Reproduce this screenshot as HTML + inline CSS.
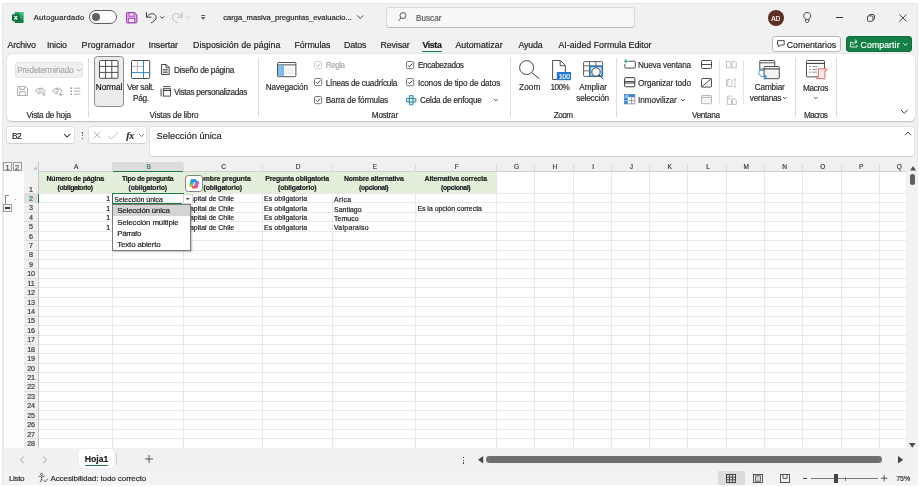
<!DOCTYPE html>
<html lang="es"><head><meta charset="utf-8"><title>carga_masiva_preguntas_evaluacion - Excel</title>
<style>
html,body{margin:0;padding:0;}
body{will-change:transform;width:921px;height:487px;overflow:hidden;background:#fff;position:relative;font-family:"Liberation Sans",sans-serif;}
.r{position:absolute;box-sizing:border-box;}
.t{position:absolute;white-space:nowrap;box-sizing:border-box;-webkit-text-stroke:0.18px currentColor;}
svg{overflow:visible;}
</style></head>
<body>
<div class="r" style="left:2.40px;top:2.50px;width:916.00px;height:482.80px;background:#f1f1f1;border:1px solid #e6e6e6;"></div>
<svg class="r" style="left:11.80px;top:11.80px;" width="11.40" height="11.00" viewBox="0 0 11.40 11.00"><rect x="2.6" y="0" width="8.8" height="11" rx="0.8" fill="#21a366"/><rect x="7" y="0" width="4.4" height="3.6" fill="#33c481"/><rect x="7" y="3.6" width="4.4" height="3.7" fill="#21a366"/><rect x="2.6" y="7.3" width="8.8" height="3.7" rx="0.8" fill="#107c41"/><rect x="2.6" y="3.6" width="4.4" height="3.7" fill="#107c41"/><rect x="0" y="2.3" width="7.6" height="6.8" rx="0.8" fill="#0e6b38"/><path d="M2.3 3.9 L5.3 7.6 M5.3 3.9 L2.3 7.6" stroke="#fff" stroke-width="1.1" fill="none"/></svg>
<div class="t" style="top:12.78px;height:10.64px;line-height:10.64px;font-size:7.6px;color:#1c1c1c;letter-spacing:0.241px;left:33.80px;">Autoguardado</div>
<div class="r" style="left:89.40px;top:10.20px;width:28.00px;height:13.60px;background:#fdfdfd;border:1px solid #5c5c5c;border-radius:7px;"></div>
<div class="r" style="left:92.00px;top:12.80px;width:8.40px;height:8.40px;background:#636363;border-radius:4.2px;"></div>
<svg class="r" style="left:125.60px;top:11.80px;" width="11.40" height="11.40" viewBox="0 0 11.40 11.40"><path d="M1.2 0.5 H8.6 L10.9 2.8 V10.2 C10.9 10.6 10.6 10.9 10.2 10.9 H1.2 C0.8 10.9 0.5 10.6 0.5 10.2 V1.2 C0.5 0.8 0.8 0.5 1.2 0.5 Z" fill="#dca6e4" stroke="#a136b4" stroke-width="1"/><rect x="3" y="0.9" width="5" height="3.2" fill="#fbf0fc" stroke="#a136b4" stroke-width="0.8"/><rect x="2.7" y="6.5" width="6" height="4.2" fill="#fbf0fc" stroke="#a136b4" stroke-width="0.8"/></svg>
<svg class="r" style="left:145.60px;top:11.80px;" width="10.60" height="11.00" viewBox="0 0 10.60 11.00"><path d="M0.5 0.2 V5.2 H5.5" fill="none" stroke="#3a3a3a" stroke-width="1"/><path d="M0.8 5 C3 1.4 7.2 0.8 9.2 3 C11.2 5.2 10 8.6 5 11" fill="none" stroke="#3a3a3a" stroke-width="1"/></svg>
<svg class="r" style="left:160.00px;top:15.90px;" width="4.40" height="2.80" viewBox="0 0 4.40 2.80"><path d="M0.3 0.4 L2.2 2.3 L4.1 0.4" fill="none" stroke="#333" stroke-width="0.95"/></svg>
<svg class="r" style="left:172.00px;top:11.80px;" width="10.60" height="11.00" viewBox="0 0 10.60 11.00"><path d="M10.1 0.2 V5.2 H5.1" fill="none" stroke="#b9b9b9" stroke-width="1"/><path d="M9.8 5 C7.6 1.4 3.4 0.8 1.4 3 C-0.6 5.2 0.6 8.6 5.6 11" fill="none" stroke="#b9b9b9" stroke-width="1"/></svg>
<svg class="r" style="left:186.00px;top:15.90px;" width="4.40" height="2.80" viewBox="0 0 4.40 2.80"><path d="M0.3 0.4 L2.2 2.3 L4.1 0.4" fill="none" stroke="#bdbdbd" stroke-width="0.9"/></svg>
<svg class="r" style="left:200.60px;top:14.80px;" width="4.40" height="4.80" viewBox="0 0 4.40 4.80"><path d="M0.3 0.5 H4.1" stroke="#444" stroke-width="0.9"/><path d="M0.5 2.4 H3.9 L2.2 4.4 Z" fill="#777" stroke="#444" stroke-width="0.7" stroke-linejoin="round"/></svg>
<div class="t" style="top:12.98px;height:10.64px;line-height:10.64px;font-size:7.6px;color:#1c1c1c;letter-spacing:0.023px;left:223.20px;">carga_masiva_preguntas_evaluacio...</div>
<svg class="r" style="left:357.00px;top:15.40px;" width="6.60" height="4.20" viewBox="0 0 6.60 4.20"><path d="M0.4 0.5 L3.3 3.5 L6.2 0.5" fill="none" stroke="#333" stroke-width="0.9"/></svg>
<div class="r" style="left:386.00px;top:7.00px;width:249.00px;height:21.40px;background:#f7f7f7;border:1px solid #d9d9d9;border-radius:3px;border-bottom-color:#bdbdbd;"></div>
<svg class="r" style="left:397.60px;top:12.40px;" width="8.40" height="9.20" viewBox="0 0 8.40 9.20"><circle cx="5" cy="3.6" r="3" fill="none" stroke="#444" stroke-width="0.9"/><path d="M3 5.9 L0.5 8.8" stroke="#444" stroke-width="0.9"/></svg>
<div class="t" style="top:12.56px;height:11.48px;line-height:11.48px;font-size:8.2px;color:#555;letter-spacing:-0.004px;left:416.00px;">Buscar</div>
<div class="r" style="left:767.80px;top:9.60px;width:16.00px;height:16.00px;background:#5e2f22;border-radius:8px;"></div>
<div class="t" style="top:13.58px;height:9.24px;line-height:9.24px;font-size:6.6px;color:#fff;left:625.80px;width:300px;text-align:center;">AD</div>
<svg class="r" style="left:802.80px;top:12.20px;" width="8.40" height="11.00" viewBox="0 0 8.40 11.00"><path d="M4.2 0.5 C6.4 0.5 7.7 2 7.7 3.9 C7.7 5.4 6.6 6.2 6 7.4 H2.4 C1.8 6.2 0.7 5.4 0.7 3.9 C0.7 2 2 0.5 4.2 0.5 Z" fill="none" stroke="#333" stroke-width="0.9"/><path d="M2.6 7.4 V9 C2.6 10 3.3 10.5 4.2 10.5 C5.1 10.5 5.8 10 5.8 9 V7.4" fill="none" stroke="#333" stroke-width="0.9"/></svg>
<div class="r" style="left:835.60px;top:16.90px;width:7.40px;height:0.90px;background:#333;"></div>
<svg class="r" style="left:867.40px;top:14.00px;" width="8.00" height="7.80" viewBox="0 0 8.00 7.80"><rect x="0.5" y="1.9" width="5.4" height="5.4" rx="1" fill="none" stroke="#333" stroke-width="0.9"/><path d="M2 1.7 C2 0.9 2.5 0.5 3.2 0.5 H6.2 C7 0.5 7.5 1 7.5 1.8 V4.6 C7.5 5.4 7 5.8 6.2 5.8" fill="none" stroke="#333" stroke-width="0.9"/></svg>
<svg class="r" style="left:899.40px;top:13.80px;" width="7.80" height="7.80" viewBox="0 0 7.80 7.80"><path d="M0.4 0.4 L7.4 7.4 M7.4 0.4 L0.4 7.4" stroke="#333" stroke-width="0.9"/></svg>
<div class="t" style="top:38.74px;height:12.32px;line-height:12.32px;font-size:8.8px;color:#1c1c1c;letter-spacing:-0.124px;left:7.40px;">Archivo</div>
<div class="t" style="top:38.74px;height:12.32px;line-height:12.32px;font-size:8.8px;color:#1c1c1c;letter-spacing:-0.109px;left:47.00px;">Inicio</div>
<div class="t" style="top:38.74px;height:12.32px;line-height:12.32px;font-size:8.8px;color:#1c1c1c;letter-spacing:0.164px;left:81.60px;">Programador</div>
<div class="t" style="top:38.74px;height:12.32px;line-height:12.32px;font-size:8.8px;color:#1c1c1c;letter-spacing:-0.062px;left:148.60px;">Insertar</div>
<div class="t" style="top:38.74px;height:12.32px;line-height:12.32px;font-size:8.8px;color:#1c1c1c;letter-spacing:0.070px;left:193.00px;">Disposición de página</div>
<div class="t" style="top:38.74px;height:12.32px;line-height:12.32px;font-size:8.8px;color:#1c1c1c;letter-spacing:-0.125px;left:294.60px;">Fórmulas</div>
<div class="t" style="top:38.74px;height:12.32px;line-height:12.32px;font-size:8.8px;color:#1c1c1c;letter-spacing:-0.147px;left:344.00px;">Datos</div>
<div class="t" style="top:38.74px;height:12.32px;line-height:12.32px;font-size:8.8px;color:#1c1c1c;letter-spacing:-0.138px;left:380.60px;">Revisar</div>
<div class="t" style="top:38.74px;height:12.32px;line-height:12.32px;font-size:8.8px;color:#1a1a1a;font-weight:bold;letter-spacing:-0.369px;left:422.40px;">Vista</div>
<div class="r" style="left:422.40px;top:50.60px;width:19.40px;height:1.40px;background:#107c41;border-radius:0.7px;"></div>
<div class="t" style="top:38.74px;height:12.32px;line-height:12.32px;font-size:8.8px;color:#1c1c1c;letter-spacing:0.025px;left:455.40px;">Automatizar</div>
<div class="t" style="top:38.74px;height:12.32px;line-height:12.32px;font-size:8.8px;color:#1c1c1c;letter-spacing:-0.148px;left:518.40px;">Ayuda</div>
<div class="t" style="top:38.74px;height:12.32px;line-height:12.32px;font-size:8.8px;color:#1c1c1c;letter-spacing:0.012px;left:558.40px;">AI-aided Formula Editor</div>
<div class="r" style="left:772.40px;top:35.60px;width:68.60px;height:16.40px;background:#fff;border:1px solid #b9b9b9;border-radius:3px;"></div>
<svg class="r" style="left:776.60px;top:39.80px;" width="8.00" height="8.00" viewBox="0 0 8.00 8.00"><path d="M0.6 0.6 H7.2 V5 H3.6 L1.8 6.8 V5 H0.6 Z" fill="none" stroke="#333" stroke-width="0.85" stroke-linejoin="round"/></svg>
<div class="t" style="top:38.61px;height:12.18px;line-height:12.18px;font-size:8.7px;color:#1c1c1c;letter-spacing:0.008px;left:786.80px;">Comentarios</div>
<div class="r" style="left:846.20px;top:35.60px;width:65.60px;height:16.40px;background:#138045;border:1px solid #0f6d3a;border-radius:3px;"></div>
<svg class="r" style="left:850.40px;top:39.40px;" width="8.20" height="8.60" viewBox="0 0 8.20 8.60"><path d="M2.8 3.4 H0.6 V8 H7 V6" fill="none" stroke="#fff" stroke-width="0.85"/><path d="M3 6 C3 3.8 4.4 2.6 6.6 2.6 M5 0.6 L7.2 2.6 L5 4.6" fill="none" stroke="#fff" stroke-width="0.85"/></svg>
<div class="t" style="top:38.61px;height:12.18px;line-height:12.18px;font-size:8.7px;color:#fff;letter-spacing:0.101px;left:860.60px;">Compartir</div>
<svg class="r" style="left:903.20px;top:42.60px;" width="4.80" height="3.00" viewBox="0 0 4.80 3.00"><path d="M0.4 0.4 L2.4 2.4 L4.4 0.4" fill="none" stroke="#fff" stroke-width="0.9"/></svg>
<div class="r" style="left:6.60px;top:53.70px;width:908.00px;height:67.50px;background:#fff;border-radius:5px;box-shadow:0 0.5px 1.5px rgba(0,0,0,0.22);"></div>
<div class="r" style="left:14.80px;top:62.00px;width:68.50px;height:15.60px;background:#f0f0f0;border:1px solid #e6e6e6;border-radius:3px;"></div>
<div class="t" style="top:64.96px;height:11.48px;line-height:11.48px;font-size:8.2px;color:#ababab;letter-spacing:-0.142px;left:17.20px;">Predeterminado</div>
<svg class="r" style="left:76.90px;top:69.40px;" width="4.00" height="2.00" viewBox="0 0 4.00 2.00"><path d="M0 0 L2.0 2 L4 0" fill="none" stroke="#ababab" stroke-width="0.9"/></svg>
<svg class="r" style="left:17.00px;top:86.00px;" width="11.00" height="10.00" viewBox="0 0 11.00 10.00"><path d="M0.8 0.5 H8.6 L10.5 2.4 V9.5 H0.5 V0.8 Z" fill="none" stroke="#a6a6a6" stroke-width="0.9"/><path d="M2.8 0.6 V3.4 H7.6 V0.6 M2.6 9.4 V5.8 H8.4 V9.4" fill="none" stroke="#a6a6a6" stroke-width="0.9"/></svg>
<svg class="r" style="left:34.90px;top:87.00px;" width="11.10" height="9.00" viewBox="0 0 11.10 9.00"><path d="M0.4 3.8 C2.2 0.6 7.4 0 10 3.8 C9 5.2 7.6 6 6.4 6.3 M0.4 3.8 C1.6 5.6 3.6 6.6 5.4 6.5" fill="none" stroke="#a0a0a0" stroke-width="0.9"/><circle cx="5.2" cy="3.6" r="1.5" fill="none" stroke="#a0a0a0" stroke-width="0.85"/><path d="M7.2 5.8 L10.6 9 M10.6 5.8 L7.2 9" stroke="#a0a0a0" stroke-width="0.9"/></svg>
<svg class="r" style="left:52.40px;top:87.00px;" width="11.00" height="9.00" viewBox="0 0 11.00 9.00"><path d="M0.4 3.8 C2.2 0.6 7.4 0 10 3.8 C9.6 4.4 9.2 4.8 8.8 5.1 M0.4 3.8 C1.6 5.6 3.6 6.6 6 6.5" fill="none" stroke="#a0a0a0" stroke-width="0.9"/><circle cx="5.2" cy="3.6" r="1.5" fill="none" stroke="#a0a0a0" stroke-width="0.85"/><path d="M6.8 7.4 H10.8 M8.8 5.4 V9.4" stroke="#a0a0a0" stroke-width="0.9"/></svg>
<svg class="r" style="left:69.70px;top:87.00px;" width="10.50" height="8.40" viewBox="0 0 10.50 8.40"><path d="M3.6 1.2 H10.2 M3.6 4.2 H10.2 M3.6 7.2 H10.2" stroke="#a6a6a6" stroke-width="0.9"/><rect x="0.3" y="0.3" width="1.7" height="1.7" fill="#a6a6a6"/><rect x="0.3" y="3.3" width="1.7" height="1.7" fill="#a6a6a6"/><rect x="0.3" y="6.3" width="1.7" height="1.7" fill="#a6a6a6"/></svg>
<div class="t" style="top:109.96px;height:11.48px;line-height:11.48px;font-size:8.2px;color:#2b2b2b;letter-spacing:-0.222px;left:26.50px;">Vista de hoja</div>
<div class="r" style="left:88.00px;top:57.60px;width:1.00px;height:59.20px;background:#dcdcdc;"></div>
<div class="r" style="left:94.20px;top:56.00px;width:30.20px;height:51.40px;background:#ececec;border:1px solid #8c8c8c;border-radius:3.5px;"></div>
<svg class="r" style="left:99.10px;top:59.90px;" width="19.50" height="18.80" viewBox="0 0 19.50 18.80"><rect x="0.5" y="0.5" width="18.5" height="17.8" rx="1" fill="#fff" stroke="#3b3b3b" stroke-width="0.9"/><path d="M6.6 0.5 V18.3 M12.8 0.5 V18.3 M0.5 6.4 H19 M0.5 12.4 H19" stroke="#3b3b3b" stroke-width="0.9"/></svg>
<div class="t" style="top:82.26px;height:11.48px;line-height:11.48px;font-size:8.2px;color:#111;letter-spacing:0.035px;left:95.80px;">Normal</div>
<svg class="r" style="left:131.10px;top:59.80px;" width="18.90" height="19.00" viewBox="0 0 18.90 19.00"><rect x="0.5" y="0.5" width="18.2" height="18" rx="0.8" fill="#fff" stroke="#3b3b3b" stroke-width="0.9"/><path d="M6.4 0.8 V12.4 M0.8 6.4 H12.2" stroke="#9a9a9a" stroke-width="0.7"/><path d="M12.5 0.9 V18.1 M0.9 12.6 H18.3" stroke="#2b88d8" stroke-width="1"/></svg>
<div class="t" style="top:82.26px;height:11.48px;line-height:11.48px;font-size:8.2px;color:#2b2b2b;letter-spacing:-0.303px;left:127.00px;">Ver salt.</div>
<div class="t" style="top:93.26px;height:11.48px;line-height:11.48px;font-size:8.2px;color:#2b2b2b;letter-spacing:-0.290px;left:133.00px;">Pág.</div>
<svg class="r" style="left:161.10px;top:64.30px;" width="8.70" height="11.00" viewBox="0 0 8.70 11.00"><path d="M0.5 0.5 H5.2 L8.2 3.5 V10.5 H0.5 Z" fill="#fff" stroke="#3b3b3b" stroke-width="0.95"/><path d="M5 0.6 V3.7 H8.1" fill="none" stroke="#3b3b3b" stroke-width="0.85"/><path d="M1.8 5.4 H6.8 M1.8 7 H6.8 M1.8 8.6 H6.8" stroke="#3b3b3b" stroke-width="0.8"/></svg>
<div class="t" style="top:64.96px;height:11.48px;line-height:11.48px;font-size:8.2px;color:#2b2b2b;letter-spacing:-0.229px;left:174.00px;">Diseño de página</div>
<svg class="r" style="left:160.00px;top:86.30px;" width="10.80" height="10.60" viewBox="0 0 10.80 10.60"><path d="M3 0.6 H10.6" stroke="#3b3b3b" stroke-width="0.9"/><rect x="0.2" y="2.6" width="1.9" height="7.8" fill="#9a9a9a"/><rect x="3.4" y="2.7" width="7" height="7.4" fill="#fff" stroke="#3b3b3b" stroke-width="0.9"/><path d="M3.4 4.5 H10.4" stroke="#3b3b3b" stroke-width="1.1"/></svg>
<div class="t" style="top:86.96px;height:11.48px;line-height:11.48px;font-size:8.2px;color:#2b2b2b;letter-spacing:-0.311px;left:174.00px;">Vistas personalizadas</div>
<div class="t" style="top:109.96px;height:11.48px;line-height:11.48px;font-size:8.2px;color:#2b2b2b;letter-spacing:-0.168px;left:149.60px;">Vistas de libro</div>
<div class="r" style="left:257.70px;top:57.60px;width:1.00px;height:59.20px;background:#dcdcdc;"></div>
<svg class="r" style="left:277.20px;top:61.60px;" width="19.60" height="15.40" viewBox="0 0 19.60 15.40"><rect x="0.5" y="0.5" width="18.4" height="14.2" rx="1" fill="#fff" stroke="#3b3b3b" stroke-width="0.9"/><path d="M0.5 2.9 H18.9" stroke="#3b3b3b" stroke-width="0.9"/><rect x="7.6" y="4.6" width="9.6" height="8.4" fill="#f2f2f2"/><rect x="1" y="3.4" width="5.2" height="10.8" fill="#82c0f2"/><path d="M6.2 3.2 V14.4" stroke="#2b7cd3" stroke-width="0.7"/></svg>
<div class="t" style="top:82.26px;height:11.48px;line-height:11.48px;font-size:8.2px;color:#2b2b2b;letter-spacing:-0.123px;left:265.80px;">Navegación</div>
<svg class="r" style="left:313.80px;top:60.50px;" width="8.20" height="8.20" viewBox="0 0 8.20 8.20"><rect x="0.5" y="0.5" width="7.2" height="7.2" rx="1.2" fill="#fff" stroke="#c4c4c4" stroke-width="0.8"/><path d="M2 4.2 L3.5 5.7 L6.3 2.5" fill="none" stroke="#b5b5b5" stroke-width="0.9"/></svg>
<div class="t" style="top:60.26px;height:11.48px;line-height:11.48px;font-size:8.2px;color:#ababab;letter-spacing:-0.556px;left:325.80px;">Regla</div>
<svg class="r" style="left:313.80px;top:77.70px;" width="8.20" height="8.20" viewBox="0 0 8.20 8.20"><rect x="0.5" y="0.5" width="7.2" height="7.2" rx="1.2" fill="#fff" stroke="#555" stroke-width="0.8"/><path d="M2 4.2 L3.5 5.7 L6.3 2.5" fill="none" stroke="#333" stroke-width="0.9"/></svg>
<div class="t" style="top:77.96px;height:11.48px;line-height:11.48px;font-size:8.2px;color:#2b2b2b;letter-spacing:-0.239px;left:325.80px;">Líneas de cuadrícula</div>
<svg class="r" style="left:313.80px;top:95.60px;" width="8.20" height="8.20" viewBox="0 0 8.20 8.20"><rect x="0.5" y="0.5" width="7.2" height="7.2" rx="1.2" fill="#fff" stroke="#555" stroke-width="0.8"/><path d="M2 4.2 L3.5 5.7 L6.3 2.5" fill="none" stroke="#333" stroke-width="0.9"/></svg>
<div class="t" style="top:94.96px;height:11.48px;line-height:11.48px;font-size:8.2px;color:#2b2b2b;letter-spacing:-0.173px;left:325.80px;">Barra de fórmulas</div>
<svg class="r" style="left:405.80px;top:60.50px;" width="8.20" height="8.20" viewBox="0 0 8.20 8.20"><rect x="0.5" y="0.5" width="7.2" height="7.2" rx="1.2" fill="#fff" stroke="#555" stroke-width="0.8"/><path d="M2 4.2 L3.5 5.7 L6.3 2.5" fill="none" stroke="#333" stroke-width="0.9"/></svg>
<div class="t" style="top:60.26px;height:11.48px;line-height:11.48px;font-size:8.2px;color:#2b2b2b;letter-spacing:-0.369px;left:418.00px;">Encabezados</div>
<svg class="r" style="left:405.80px;top:77.70px;" width="8.20" height="8.20" viewBox="0 0 8.20 8.20"><rect x="0.5" y="0.5" width="7.2" height="7.2" rx="1.2" fill="#fff" stroke="#555" stroke-width="0.8"/><path d="M2 4.2 L3.5 5.7 L6.3 2.5" fill="none" stroke="#333" stroke-width="0.9"/></svg>
<div class="t" style="top:77.96px;height:11.48px;line-height:11.48px;font-size:8.2px;color:#2b2b2b;letter-spacing:-0.109px;left:418.00px;">Iconos de tipo de datos</div>
<svg class="r" style="left:406.00px;top:95.00px;" width="10.40" height="10.40" viewBox="0 0 10.40 10.40"><path d="M3.4 0.6 H7 V3.4 H9.8 V7 H7 V9.8 H3.4 V7 H0.6 V3.4 H3.4 Z" fill="#cfe6f7" stroke="#2b7cd3" stroke-width="0.9"/><rect x="3.4" y="3.4" width="3.6" height="3.6" fill="#fff" stroke="#1e8e4e" stroke-width="1"/></svg>
<div class="t" style="top:94.96px;height:11.48px;line-height:11.48px;font-size:8.2px;color:#2b2b2b;letter-spacing:-0.183px;left:420.00px;">Celda de enfoque</div>
<svg class="r" style="left:493.50px;top:99.45px;" width="3.80" height="1.90" viewBox="0 0 3.80 1.90"><path d="M0 0 L1.9 1.9 L3.8 0" fill="none" stroke="#444" stroke-width="0.9"/></svg>
<div class="t" style="top:109.96px;height:11.48px;line-height:11.48px;font-size:8.2px;color:#2b2b2b;letter-spacing:-0.232px;left:371.80px;">Mostrar</div>
<div class="r" style="left:509.50px;top:57.60px;width:1.00px;height:59.20px;background:#dcdcdc;"></div>
<svg class="r" style="left:519.40px;top:60.40px;" width="21.20" height="19.20" viewBox="0 0 21.20 19.20"><circle cx="7.6" cy="7.6" r="7" fill="none" stroke="#3b3b3b" stroke-width="0.95"/><path d="M12.6 12.6 L20.6 18.8" stroke="#3b3b3b" stroke-width="1"/></svg>
<div class="t" style="top:82.26px;height:11.48px;line-height:11.48px;font-size:8.2px;color:#2b2b2b;letter-spacing:0.146px;left:519.00px;">Zoom</div>
<svg class="r" style="left:552.40px;top:60.00px;" width="19.00" height="20.20" viewBox="0 0 19.00 20.20"><path d="M0.6 0.5 H8.4 L13.4 5.5 V12 M0.6 0.5 V19.5 H5" fill="none" stroke="#3b3b3b" stroke-width="0.9"/><path d="M8.2 0.7 V5.7 H13.2" fill="none" stroke="#3b3b3b" stroke-width="0.85"/><rect x="4.8" y="12" width="14.2" height="8.2" fill="#1f78d1"/></svg>
<div class="t" style="top:71.88px;height:9.24px;line-height:9.24px;font-size:6.6px;color:#fff;left:414.40px;width:300px;text-align:center;letter-spacing:-0.1px;">100</div>
<div class="t" style="top:82.26px;height:11.48px;line-height:11.48px;font-size:8.2px;color:#2b2b2b;letter-spacing:-0.600px;left:550.60px;">100%</div>
<svg class="r" style="left:583.00px;top:61.40px;" width="21.00" height="18.60" viewBox="0 0 21.00 18.60"><rect x="0.6" y="0.6" width="19" height="14.8" rx="1" fill="#fff" stroke="#4a4a4a" stroke-width="0.9"/><path d="M0.6 4.8 H19.6 M0.6 9.8 H6.4 M6.5 0.6 V15.4 M12.8 0.6 V4.8" stroke="#4a4a4a" stroke-width="0.8"/><rect x="7.1" y="5.5" width="12" height="9.6" fill="#d6eafb" stroke="#1f7ed6" stroke-width="1.3"/><circle cx="13" cy="11" r="4.2" fill="#fafafa" stroke="#3b3b3b" stroke-width="0.95"/><path d="M16 14 L20.4 18.2" stroke="#3b3b3b" stroke-width="1"/></svg>
<div class="t" style="top:82.26px;height:11.48px;line-height:11.48px;font-size:8.2px;color:#2b2b2b;letter-spacing:0.001px;left:579.20px;">Ampliar</div>
<div class="t" style="top:93.26px;height:11.48px;line-height:11.48px;font-size:8.2px;color:#2b2b2b;letter-spacing:-0.148px;left:576.20px;">selección</div>
<div class="t" style="top:109.96px;height:11.48px;line-height:11.48px;font-size:8.2px;color:#2b2b2b;letter-spacing:-0.587px;left:553.80px;">Zoom</div>
<div class="r" style="left:616.30px;top:57.60px;width:1.00px;height:59.20px;background:#dcdcdc;"></div>
<svg class="r" style="left:623.60px;top:59.40px;" width="11.80" height="9.60" viewBox="0 0 11.80 9.60"><path d="M4.4 2.2 H10.6 C11 2.2 11.3 2.5 11.3 2.9 V8.4 C11.3 8.8 11 9.1 10.6 9.1 H1.6 C1.2 9.1 0.9 8.8 0.9 8.4 V5" fill="none" stroke="#3b3b3b" stroke-width="0.9"/><path d="M0 2.2 H4 M2 0.2 V4.2" stroke="#1e9e50" stroke-width="1"/></svg>
<div class="t" style="top:59.96px;height:11.48px;line-height:11.48px;font-size:8.2px;color:#2b2b2b;letter-spacing:-0.164px;left:638.00px;">Nueva ventana</div>
<svg class="r" style="left:624.00px;top:77.20px;" width="11.40" height="10.40" viewBox="0 0 11.40 10.40"><rect x="0.6" y="0.6" width="10.2" height="9.2" rx="0.8" fill="#fff" stroke="#3b3b3b" stroke-width="1"/><path d="M0.6 4.6 H10.8 M0.6 6 H10.8" stroke="#3b3b3b" stroke-width="1"/></svg>
<div class="t" style="top:77.96px;height:11.48px;line-height:11.48px;font-size:8.2px;color:#2b2b2b;letter-spacing:-0.080px;left:638.00px;">Organizar todo</div>
<svg class="r" style="left:624.00px;top:94.40px;" width="11.40" height="10.40" viewBox="0 0 11.40 10.40"><rect x="0.5" y="0.5" width="10.4" height="9.4" fill="#fff" stroke="#777" stroke-width="0.7"/><path d="M0.5 3.4 H10.9 M0.5 6.6 H10.9 M7.4 0.5 V9.9" stroke="#777" stroke-width="0.7"/><rect x="0.5" y="0.5" width="3.6" height="9.4" fill="#2b88d8"/><rect x="0.5" y="0.5" width="10.4" height="2.9" fill="#2b88d8"/><path d="M4.1 0.5 V9.9 M0.5 3.4 H10.9 M0.5 6.6 H4.1" stroke="#fff" stroke-width="0.6"/><path d="M1.2 1.2 L3.2 2.8 M3.2 1.2 L1.2 2.8" stroke="#fff" stroke-width="0.6"/></svg>
<div class="t" style="top:94.96px;height:11.48px;line-height:11.48px;font-size:8.2px;color:#2b2b2b;letter-spacing:-0.039px;left:638.00px;">Inmovilizar</div>
<svg class="r" style="left:681.30px;top:99.45px;" width="3.80" height="1.90" viewBox="0 0 3.80 1.90"><path d="M0 0 L1.9 1.9 L3.8 0" fill="none" stroke="#444" stroke-width="0.9"/></svg>
<svg class="r" style="left:701.20px;top:60.00px;" width="11.00" height="9.00" viewBox="0 0 11.00 9.00"><rect x="0.5" y="0.5" width="10" height="8" rx="0.8" fill="#fff" stroke="#3b3b3b" stroke-width="0.9"/><path d="M0.5 4.5 H10.5" stroke="#3b3b3b" stroke-width="0.9"/></svg>
<svg class="r" style="left:701.20px;top:77.60px;" width="11.00" height="9.60" viewBox="0 0 11.00 9.60"><rect x="0.5" y="0.5" width="10" height="8.6" rx="0.8" fill="#fff" stroke="#3b3b3b" stroke-width="0.9"/><path d="M0.8 8.8 L10.2 0.8" stroke="#3b3b3b" stroke-width="0.9"/></svg>
<svg class="r" style="left:701.20px;top:95.00px;" width="11.00" height="9.20" viewBox="0 0 11.00 9.20"><rect x="0.5" y="0.5" width="10" height="8.2" rx="0.8" fill="#f4f4f4" stroke="#b0b0b0" stroke-width="0.9"/><path d="M0.5 2.4 H10.5" stroke="#b0b0b0" stroke-width="0.9"/></svg>
<div class="r" style="left:718.90px;top:60.00px;width:1.00px;height:44.40px;background:#e6e6e6;"></div>
<svg class="r" style="left:726.00px;top:60.40px;" width="11.20" height="8.40" viewBox="0 0 11.20 8.40"><path d="M0.5 1.4 H3.4 L4.8 2.8 V7.8 H0.5 Z M6 1.4 H8.9 L10.3 2.8 V7.8 H6 Z" fill="none" stroke="#b0b0b0" stroke-width="0.8"/></svg>
<svg class="r" style="left:726.00px;top:77.60px;" width="11.20" height="9.80" viewBox="0 0 11.20 9.80"><path d="M0.5 1.4 V8.4 M1.8 1.4 H4.6 L6 2.8 V8.4 H1.8 Z" fill="none" stroke="#b0b0b0" stroke-width="0.8"/><path d="M9 0.6 V9.2 M7.8 1.8 L9 0.6 L10.2 1.8 M7.8 8 L9 9.2 L10.2 8" fill="none" stroke="#b0b0b0" stroke-width="0.7"/></svg>
<svg class="r" style="left:726.00px;top:94.60px;" width="11.20" height="9.80" viewBox="0 0 11.20 9.80"><path d="M1.4 3.8 H4.4 L5.6 5 V9.4 H1.4 Z M6.4 3.8 H9 L10.4 5.2 V9.4 H6.4 Z" fill="none" stroke="#b0b0b0" stroke-width="0.8"/><path d="M1 2.6 C2.4 0.4 5 0.4 6.4 2.2 M1 0.8 V2.8 H3" fill="none" stroke="#b0b0b0" stroke-width="0.7"/></svg>
<div class="r" style="left:742.90px;top:60.00px;width:1.00px;height:44.40px;background:#e6e6e6;"></div>
<svg class="r" style="left:757.60px;top:59.80px;" width="21.60" height="20.00" viewBox="0 0 21.60 20.00"><rect x="1.8" y="0.5" width="15" height="9.6" rx="0.8" fill="#fff" stroke="#3b3b3b" stroke-width="0.9"/><path d="M1.8 2.8 H16.8" stroke="#3b3b3b" stroke-width="0.9"/><rect x="6.1" y="6.5" width="15.2" height="12.2" rx="0.8" fill="#f4f4f4" stroke="#3b3b3b" stroke-width="0.9"/><path d="M6.1 8.9 H21.3" stroke="#3b3b3b" stroke-width="1.1"/><path d="M5.4 8.2 C1.2 8.8 -0.8 13 2 15.4 C3.4 16.6 5.4 16.8 8.4 16.7 M6 14 L8.8 16.7 L5.8 19.4" fill="none" stroke="#2b95e0" stroke-width="1"/></svg>
<div class="t" style="top:82.26px;height:11.48px;line-height:11.48px;font-size:8.2px;color:#2b2b2b;letter-spacing:-0.165px;left:754.80px;">Cambiar</div>
<div class="t" style="top:93.26px;height:11.48px;line-height:11.48px;font-size:8.2px;color:#2b2b2b;letter-spacing:-0.240px;left:749.80px;">ventanas</div>
<svg class="r" style="left:783.40px;top:97.10px;" width="3.60" height="1.80" viewBox="0 0 3.60 1.80"><path d="M0 0 L1.8 1.8 L3.6 0" fill="none" stroke="#444" stroke-width="0.9"/></svg>
<div class="t" style="top:109.96px;height:11.48px;line-height:11.48px;font-size:8.2px;color:#2b2b2b;letter-spacing:-0.350px;left:692.00px;">Ventana</div>
<div class="r" style="left:794.90px;top:57.60px;width:1.00px;height:59.20px;background:#dcdcdc;"></div>
<svg class="r" style="left:805.80px;top:60.00px;" width="21.60" height="20.00" viewBox="0 0 21.60 20.00"><rect x="0.5" y="0.5" width="18" height="16.4" rx="0.8" fill="#fff" stroke="#3b3b3b" stroke-width="0.9"/><path d="M0.5 3.4 H18.5" stroke="#3b3b3b" stroke-width="1.1"/><path d="M3 6.6 H5 M6.4 6.6 H11 M3 9.4 H5 M6.4 9.4 H11 M3 12.2 H5 M6.4 12.2 H11" stroke="#777" stroke-width="0.8"/><path d="M12.4 8.8 H20.4 C21.2 8.8 21.4 10.6 20.2 10.6 H19 V18.6 C19 19.6 17.4 19.6 17.4 18.6 H11 C10 18.6 10 17 11 17 H12.4 Z" fill="#fdeceb" stroke="#e8524a" stroke-width="0.85"/></svg>
<div class="t" style="top:82.86px;height:11.48px;line-height:11.48px;font-size:8.2px;color:#2b2b2b;letter-spacing:-0.297px;left:803.00px;">Macros</div>
<svg class="r" style="left:814.20px;top:97.30px;" width="3.60" height="1.80" viewBox="0 0 3.60 1.80"><path d="M0 0 L1.8 1.8 L3.6 0" fill="none" stroke="#444" stroke-width="0.9"/></svg>
<div class="t" style="top:109.96px;height:11.48px;line-height:11.48px;font-size:8.2px;color:#2b2b2b;letter-spacing:-0.577px;left:804.00px;">Macros</div>
<div class="r" style="left:835.50px;top:57.60px;width:1.00px;height:59.20px;background:#dcdcdc;"></div>
<svg class="r" style="left:901.10px;top:110.00px;" width="6.60" height="3.20" viewBox="0 0 6.60 3.20"><path d="M0 0 L3.3 3.2 L6.6 0" fill="none" stroke="#333" stroke-width="0.95"/></svg>
<div class="r" style="left:6.40px;top:126.20px;width:68.80px;height:17.80px;background:#fff;border:1px solid #e0e0e0;border-radius:3.5px;border-bottom-color:#d2d2d2;"></div>
<div class="t" style="top:130.52px;height:11.76px;line-height:11.76px;font-size:8.4px;color:#1a1a1a;letter-spacing:-0.600px;left:12.00px;">B2</div>
<svg class="r" style="left:63.90px;top:134.45px;" width="6.20" height="3.10" viewBox="0 0 6.20 3.10"><path d="M0 0 L3.1 3.1 L6.2 0" fill="none" stroke="#2a2a2a" stroke-width="1.05"/></svg>
<div class="r" style="left:81.60px;top:132.20px;width:1.40px;height:1.40px;background:#555;"></div>
<div class="r" style="left:81.60px;top:135.00px;width:1.40px;height:1.40px;background:#555;"></div>
<div class="r" style="left:81.60px;top:137.80px;width:1.40px;height:1.40px;background:#555;"></div>
<div class="r" style="left:88.40px;top:126.20px;width:58.40px;height:17.80px;background:#fff;border:1px solid #e0e0e0;border-radius:3.5px;border-bottom-color:#d2d2d2;"></div>
<svg class="r" style="left:93.40px;top:131.40px;" width="8.00" height="8.00" viewBox="0 0 8.00 8.00"><path d="M0.4 0.4 L7.6 7.6 M7.6 0.4 L0.4 7.6" stroke="#ababab" stroke-width="0.85"/></svg>
<svg class="r" style="left:108.20px;top:131.60px;" width="10.20" height="7.60" viewBox="0 0 10.20 7.60"><path d="M0.4 4.2 L3.4 7.2 L9.8 0.4" fill="none" stroke="#ababab" stroke-width="0.85"/></svg>
<div class="t" style="top:129.10px;height:14.0px;line-height:14.0px;font-size:10px;color:#333;font-weight:bold;font-style:italic;font-family:&quot;Liberation Serif&quot;,serif;left:126.20px;letter-spacing:-0.3px;">fx</div>
<svg class="r" style="left:138.70px;top:134.10px;" width="5.00" height="2.60" viewBox="0 0 5.00 2.60"><path d="M0 0 L2.5 2.6 L5 0" fill="none" stroke="#666" stroke-width="0.85"/></svg>
<div class="r" style="left:149.00px;top:126.20px;width:766.00px;height:31.00px;background:#fff;border:1px solid #e0e0e0;border-radius:3.5px;border-bottom-color:#d2d2d2;"></div>
<div class="t" style="top:130.19px;height:13.02px;line-height:13.02px;font-size:9.3px;color:#2a2a2a;letter-spacing:-0.010px;left:156.60px;">Selección única</div>
<svg class="r" style="left:904.60px;top:132.00px;" width="6.00" height="3.20" viewBox="0 0 6.00 3.20"><path d="M0 3.2 L3 0 L6 3.2" fill="none" stroke="#333" stroke-width="0.95"/></svg>
<div class="r" style="left:3.50px;top:157.00px;width:20.50px;height:14.50px;background:#f1f1f1;"></div>
<div class="r" style="left:3.50px;top:171.50px;width:20.50px;height:276.90px;background:#fdfdfd;"></div>
<div class="r" style="left:38.40px;top:171.50px;width:867.40px;height:276.90px;background:#fff;"></div>
<div class="r" style="left:24.00px;top:162.00px;width:881.80px;height:9.50px;background:#f0f0f0;"></div>
<div class="r" style="left:24.00px;top:171.50px;width:14.40px;height:276.90px;background:#f0f0f0;"></div>
<div class="r" style="left:38.40px;top:171.50px;width:458.00px;height:22.00px;background:#e2efda;"></div>
<div class="r" style="left:112.30px;top:162.00px;width:71.10px;height:9.50px;background:#dcdcdc;"></div>
<div class="r" style="left:24.00px;top:193.50px;width:14.40px;height:9.43px;background:#dedede;"></div>
<div class="r" style="left:38.40px;top:193.05px;width:867.40px;height:0.90px;background:#e9e9e9;"></div>
<div class="r" style="left:24.00px;top:193.05px;width:14.40px;height:0.90px;background:#dedede;"></div>
<div class="r" style="left:38.40px;top:202.48px;width:867.40px;height:0.90px;background:#e9e9e9;"></div>
<div class="r" style="left:24.00px;top:202.48px;width:14.40px;height:0.90px;background:#dedede;"></div>
<div class="r" style="left:38.40px;top:211.91px;width:867.40px;height:0.90px;background:#e9e9e9;"></div>
<div class="r" style="left:24.00px;top:211.91px;width:14.40px;height:0.90px;background:#dedede;"></div>
<div class="r" style="left:38.40px;top:221.34px;width:867.40px;height:0.90px;background:#e9e9e9;"></div>
<div class="r" style="left:24.00px;top:221.34px;width:14.40px;height:0.90px;background:#dedede;"></div>
<div class="r" style="left:38.40px;top:230.77px;width:867.40px;height:0.90px;background:#e9e9e9;"></div>
<div class="r" style="left:24.00px;top:230.77px;width:14.40px;height:0.90px;background:#dedede;"></div>
<div class="r" style="left:38.40px;top:240.20px;width:867.40px;height:0.90px;background:#e9e9e9;"></div>
<div class="r" style="left:24.00px;top:240.20px;width:14.40px;height:0.90px;background:#dedede;"></div>
<div class="r" style="left:38.40px;top:249.63px;width:867.40px;height:0.90px;background:#e9e9e9;"></div>
<div class="r" style="left:24.00px;top:249.63px;width:14.40px;height:0.90px;background:#dedede;"></div>
<div class="r" style="left:38.40px;top:259.06px;width:867.40px;height:0.90px;background:#e9e9e9;"></div>
<div class="r" style="left:24.00px;top:259.06px;width:14.40px;height:0.90px;background:#dedede;"></div>
<div class="r" style="left:38.40px;top:268.49px;width:867.40px;height:0.90px;background:#e9e9e9;"></div>
<div class="r" style="left:24.00px;top:268.49px;width:14.40px;height:0.90px;background:#dedede;"></div>
<div class="r" style="left:38.40px;top:277.92px;width:867.40px;height:0.90px;background:#e9e9e9;"></div>
<div class="r" style="left:24.00px;top:277.92px;width:14.40px;height:0.90px;background:#dedede;"></div>
<div class="r" style="left:38.40px;top:287.35px;width:867.40px;height:0.90px;background:#e9e9e9;"></div>
<div class="r" style="left:24.00px;top:287.35px;width:14.40px;height:0.90px;background:#dedede;"></div>
<div class="r" style="left:38.40px;top:296.78px;width:867.40px;height:0.90px;background:#e9e9e9;"></div>
<div class="r" style="left:24.00px;top:296.78px;width:14.40px;height:0.90px;background:#dedede;"></div>
<div class="r" style="left:38.40px;top:306.21px;width:867.40px;height:0.90px;background:#e9e9e9;"></div>
<div class="r" style="left:24.00px;top:306.21px;width:14.40px;height:0.90px;background:#dedede;"></div>
<div class="r" style="left:38.40px;top:315.64px;width:867.40px;height:0.90px;background:#e9e9e9;"></div>
<div class="r" style="left:24.00px;top:315.64px;width:14.40px;height:0.90px;background:#dedede;"></div>
<div class="r" style="left:38.40px;top:325.07px;width:867.40px;height:0.90px;background:#e9e9e9;"></div>
<div class="r" style="left:24.00px;top:325.07px;width:14.40px;height:0.90px;background:#dedede;"></div>
<div class="r" style="left:38.40px;top:334.50px;width:867.40px;height:0.90px;background:#e9e9e9;"></div>
<div class="r" style="left:24.00px;top:334.50px;width:14.40px;height:0.90px;background:#dedede;"></div>
<div class="r" style="left:38.40px;top:343.93px;width:867.40px;height:0.90px;background:#e9e9e9;"></div>
<div class="r" style="left:24.00px;top:343.93px;width:14.40px;height:0.90px;background:#dedede;"></div>
<div class="r" style="left:38.40px;top:353.36px;width:867.40px;height:0.90px;background:#e9e9e9;"></div>
<div class="r" style="left:24.00px;top:353.36px;width:14.40px;height:0.90px;background:#dedede;"></div>
<div class="r" style="left:38.40px;top:362.79px;width:867.40px;height:0.90px;background:#e9e9e9;"></div>
<div class="r" style="left:24.00px;top:362.79px;width:14.40px;height:0.90px;background:#dedede;"></div>
<div class="r" style="left:38.40px;top:372.22px;width:867.40px;height:0.90px;background:#e9e9e9;"></div>
<div class="r" style="left:24.00px;top:372.22px;width:14.40px;height:0.90px;background:#dedede;"></div>
<div class="r" style="left:38.40px;top:381.65px;width:867.40px;height:0.90px;background:#e9e9e9;"></div>
<div class="r" style="left:24.00px;top:381.65px;width:14.40px;height:0.90px;background:#dedede;"></div>
<div class="r" style="left:38.40px;top:391.08px;width:867.40px;height:0.90px;background:#e9e9e9;"></div>
<div class="r" style="left:24.00px;top:391.08px;width:14.40px;height:0.90px;background:#dedede;"></div>
<div class="r" style="left:38.40px;top:400.51px;width:867.40px;height:0.90px;background:#e9e9e9;"></div>
<div class="r" style="left:24.00px;top:400.51px;width:14.40px;height:0.90px;background:#dedede;"></div>
<div class="r" style="left:38.40px;top:409.94px;width:867.40px;height:0.90px;background:#e9e9e9;"></div>
<div class="r" style="left:24.00px;top:409.94px;width:14.40px;height:0.90px;background:#dedede;"></div>
<div class="r" style="left:38.40px;top:419.37px;width:867.40px;height:0.90px;background:#e9e9e9;"></div>
<div class="r" style="left:24.00px;top:419.37px;width:14.40px;height:0.90px;background:#dedede;"></div>
<div class="r" style="left:38.40px;top:428.80px;width:867.40px;height:0.90px;background:#e9e9e9;"></div>
<div class="r" style="left:24.00px;top:428.80px;width:14.40px;height:0.90px;background:#dedede;"></div>
<div class="r" style="left:38.40px;top:438.23px;width:867.40px;height:0.90px;background:#e9e9e9;"></div>
<div class="r" style="left:24.00px;top:438.23px;width:14.40px;height:0.90px;background:#dedede;"></div>
<div class="r" style="left:38.40px;top:171.20px;width:867.40px;height:0.80px;background:#d0d0d0;"></div>
<div class="r" style="left:112.30px;top:170.70px;width:71.10px;height:1.40px;background:#1e7b46;"></div>
<div class="r" style="left:111.85px;top:193.50px;width:0.90px;height:254.90px;background:#e9e9e9;"></div>
<div class="r" style="left:111.85px;top:171.50px;width:0.90px;height:22.00px;background:#e2efda;"></div>
<div class="r" style="left:111.85px;top:163.50px;width:0.90px;height:8.00px;background:#dcdcdc;"></div>
<div class="r" style="left:182.95px;top:193.50px;width:0.90px;height:254.90px;background:#e9e9e9;"></div>
<div class="r" style="left:182.95px;top:171.50px;width:0.90px;height:22.00px;background:#e2efda;"></div>
<div class="r" style="left:182.95px;top:163.50px;width:0.90px;height:8.00px;background:#dcdcdc;"></div>
<div class="r" style="left:261.75px;top:193.50px;width:0.90px;height:254.90px;background:#e9e9e9;"></div>
<div class="r" style="left:261.75px;top:171.50px;width:0.90px;height:22.00px;background:#e2efda;"></div>
<div class="r" style="left:261.75px;top:163.50px;width:0.90px;height:8.00px;background:#dcdcdc;"></div>
<div class="r" style="left:331.95px;top:193.50px;width:0.90px;height:254.90px;background:#e9e9e9;"></div>
<div class="r" style="left:331.95px;top:171.50px;width:0.90px;height:22.00px;background:#e2efda;"></div>
<div class="r" style="left:331.95px;top:163.50px;width:0.90px;height:8.00px;background:#dcdcdc;"></div>
<div class="r" style="left:414.95px;top:193.50px;width:0.90px;height:254.90px;background:#e9e9e9;"></div>
<div class="r" style="left:414.95px;top:171.50px;width:0.90px;height:22.00px;background:#e2efda;"></div>
<div class="r" style="left:414.95px;top:163.50px;width:0.90px;height:8.00px;background:#dcdcdc;"></div>
<div class="r" style="left:495.95px;top:193.50px;width:0.90px;height:254.90px;background:#e9e9e9;"></div>
<div class="r" style="left:495.95px;top:171.50px;width:0.90px;height:22.00px;background:#e9e9e9;"></div>
<div class="r" style="left:495.95px;top:163.50px;width:0.90px;height:8.00px;background:#dcdcdc;"></div>
<div class="r" style="left:534.25px;top:171.50px;width:0.90px;height:276.90px;background:#e9e9e9;"></div>
<div class="r" style="left:534.25px;top:163.50px;width:0.90px;height:8.00px;background:#dcdcdc;"></div>
<div class="r" style="left:572.55px;top:171.50px;width:0.90px;height:276.90px;background:#e9e9e9;"></div>
<div class="r" style="left:572.55px;top:163.50px;width:0.90px;height:8.00px;background:#dcdcdc;"></div>
<div class="r" style="left:610.85px;top:171.50px;width:0.90px;height:276.90px;background:#e9e9e9;"></div>
<div class="r" style="left:610.85px;top:163.50px;width:0.90px;height:8.00px;background:#dcdcdc;"></div>
<div class="r" style="left:649.15px;top:171.50px;width:0.90px;height:276.90px;background:#e9e9e9;"></div>
<div class="r" style="left:649.15px;top:163.50px;width:0.90px;height:8.00px;background:#dcdcdc;"></div>
<div class="r" style="left:687.45px;top:171.50px;width:0.90px;height:276.90px;background:#e9e9e9;"></div>
<div class="r" style="left:687.45px;top:163.50px;width:0.90px;height:8.00px;background:#dcdcdc;"></div>
<div class="r" style="left:725.75px;top:171.50px;width:0.90px;height:276.90px;background:#e9e9e9;"></div>
<div class="r" style="left:725.75px;top:163.50px;width:0.90px;height:8.00px;background:#dcdcdc;"></div>
<div class="r" style="left:764.05px;top:171.50px;width:0.90px;height:276.90px;background:#e9e9e9;"></div>
<div class="r" style="left:764.05px;top:163.50px;width:0.90px;height:8.00px;background:#dcdcdc;"></div>
<div class="r" style="left:802.35px;top:171.50px;width:0.90px;height:276.90px;background:#e9e9e9;"></div>
<div class="r" style="left:802.35px;top:163.50px;width:0.90px;height:8.00px;background:#dcdcdc;"></div>
<div class="r" style="left:840.65px;top:171.50px;width:0.90px;height:276.90px;background:#e9e9e9;"></div>
<div class="r" style="left:840.65px;top:163.50px;width:0.90px;height:8.00px;background:#dcdcdc;"></div>
<div class="r" style="left:878.95px;top:171.50px;width:0.90px;height:276.90px;background:#e9e9e9;"></div>
<div class="r" style="left:878.95px;top:163.50px;width:0.90px;height:8.00px;background:#dcdcdc;"></div>
<div class="r" style="left:37.90px;top:162.00px;width:0.90px;height:286.40px;background:#c6c6c6;"></div>
<div class="r" style="left:37.60px;top:193.50px;width:1.60px;height:9.43px;background:#1e7b46;"></div>
<div class="t" style="top:162.45px;height:9.1px;line-height:9.1px;font-size:6.5px;color:#3a3a3a;left:-73.75px;width:300px;text-align:center;">A</div>
<div class="t" style="top:162.45px;height:9.1px;line-height:9.1px;font-size:6.5px;color:#2f7d4f;left:-1.25px;width:300px;text-align:center;">B</div>
<div class="t" style="top:162.45px;height:9.1px;line-height:9.1px;font-size:6.5px;color:#3a3a3a;left:73.70px;width:300px;text-align:center;">C</div>
<div class="t" style="top:162.45px;height:9.1px;line-height:9.1px;font-size:6.5px;color:#3a3a3a;left:148.20px;width:300px;text-align:center;">D</div>
<div class="t" style="top:162.45px;height:9.1px;line-height:9.1px;font-size:6.5px;color:#3a3a3a;left:224.80px;width:300px;text-align:center;">E</div>
<div class="t" style="top:162.45px;height:9.1px;line-height:9.1px;font-size:6.5px;color:#3a3a3a;left:306.80px;width:300px;text-align:center;">F</div>
<div class="t" style="top:162.45px;height:9.1px;line-height:9.1px;font-size:6.5px;color:#3a3a3a;left:366.45px;width:300px;text-align:center;">G</div>
<div class="t" style="top:162.45px;height:9.1px;line-height:9.1px;font-size:6.5px;color:#3a3a3a;left:404.75px;width:300px;text-align:center;">H</div>
<div class="t" style="top:162.45px;height:9.1px;line-height:9.1px;font-size:6.5px;color:#3a3a3a;left:443.05px;width:300px;text-align:center;">I</div>
<div class="t" style="top:162.45px;height:9.1px;line-height:9.1px;font-size:6.5px;color:#3a3a3a;left:481.35px;width:300px;text-align:center;">J</div>
<div class="t" style="top:162.45px;height:9.1px;line-height:9.1px;font-size:6.5px;color:#3a3a3a;left:519.65px;width:300px;text-align:center;">K</div>
<div class="t" style="top:162.45px;height:9.1px;line-height:9.1px;font-size:6.5px;color:#3a3a3a;left:557.95px;width:300px;text-align:center;">L</div>
<div class="t" style="top:162.45px;height:9.1px;line-height:9.1px;font-size:6.5px;color:#3a3a3a;left:596.25px;width:300px;text-align:center;">M</div>
<div class="t" style="top:162.45px;height:9.1px;line-height:9.1px;font-size:6.5px;color:#3a3a3a;left:634.55px;width:300px;text-align:center;">N</div>
<div class="t" style="top:162.45px;height:9.1px;line-height:9.1px;font-size:6.5px;color:#3a3a3a;left:672.85px;width:300px;text-align:center;">O</div>
<div class="t" style="top:162.45px;height:9.1px;line-height:9.1px;font-size:6.5px;color:#3a3a3a;left:711.15px;width:300px;text-align:center;">P</div>
<div class="t" style="top:162.45px;height:9.1px;line-height:9.1px;font-size:6.5px;color:#3a3a3a;left:749.30px;width:300px;text-align:center;">Q</div>
<svg class="r" style="left:32.60px;top:165.80px;" width="4.00" height="4.00" viewBox="0 0 4.00 4.00"><path d="M4 0 V4 H0 Z" fill="#c9c9c9"/></svg>
<div class="t" style="top:185.06px;height:10.08px;line-height:10.08px;font-size:7.2px;color:#3a3a3a;left:-119.00px;width:300px;text-align:center;">1</div>
<div class="t" style="top:193.78px;height:10.08px;line-height:10.08px;font-size:7.2px;color:#1e7b46;left:-119.00px;width:300px;text-align:center;letter-spacing:-0.2px;">2</div>
<div class="t" style="top:203.21px;height:10.08px;line-height:10.08px;font-size:7.2px;color:#3a3a3a;left:-119.00px;width:300px;text-align:center;letter-spacing:-0.2px;">3</div>
<div class="t" style="top:212.64px;height:10.08px;line-height:10.08px;font-size:7.2px;color:#3a3a3a;left:-119.00px;width:300px;text-align:center;letter-spacing:-0.2px;">4</div>
<div class="t" style="top:222.06px;height:10.08px;line-height:10.08px;font-size:7.2px;color:#3a3a3a;left:-119.00px;width:300px;text-align:center;letter-spacing:-0.2px;">5</div>
<div class="t" style="top:231.50px;height:10.08px;line-height:10.08px;font-size:7.2px;color:#3a3a3a;left:-119.00px;width:300px;text-align:center;letter-spacing:-0.2px;">6</div>
<div class="t" style="top:240.93px;height:10.08px;line-height:10.08px;font-size:7.2px;color:#3a3a3a;left:-119.00px;width:300px;text-align:center;letter-spacing:-0.2px;">7</div>
<div class="t" style="top:250.35px;height:10.08px;line-height:10.08px;font-size:7.2px;color:#3a3a3a;left:-119.00px;width:300px;text-align:center;letter-spacing:-0.2px;">8</div>
<div class="t" style="top:259.78px;height:10.08px;line-height:10.08px;font-size:7.2px;color:#3a3a3a;left:-119.00px;width:300px;text-align:center;letter-spacing:-0.2px;">9</div>
<div class="t" style="top:269.21px;height:10.08px;line-height:10.08px;font-size:7.2px;color:#3a3a3a;left:-119.00px;width:300px;text-align:center;letter-spacing:-0.2px;">10</div>
<div class="t" style="top:278.64px;height:10.08px;line-height:10.08px;font-size:7.2px;color:#3a3a3a;left:-119.00px;width:300px;text-align:center;letter-spacing:-0.2px;">11</div>
<div class="t" style="top:288.07px;height:10.08px;line-height:10.08px;font-size:7.2px;color:#3a3a3a;left:-119.00px;width:300px;text-align:center;letter-spacing:-0.2px;">12</div>
<div class="t" style="top:297.50px;height:10.08px;line-height:10.08px;font-size:7.2px;color:#3a3a3a;left:-119.00px;width:300px;text-align:center;letter-spacing:-0.2px;">13</div>
<div class="t" style="top:306.93px;height:10.08px;line-height:10.08px;font-size:7.2px;color:#3a3a3a;left:-119.00px;width:300px;text-align:center;letter-spacing:-0.2px;">14</div>
<div class="t" style="top:316.36px;height:10.08px;line-height:10.08px;font-size:7.2px;color:#3a3a3a;left:-119.00px;width:300px;text-align:center;letter-spacing:-0.2px;">15</div>
<div class="t" style="top:325.79px;height:10.08px;line-height:10.08px;font-size:7.2px;color:#3a3a3a;left:-119.00px;width:300px;text-align:center;letter-spacing:-0.2px;">16</div>
<div class="t" style="top:335.22px;height:10.08px;line-height:10.08px;font-size:7.2px;color:#3a3a3a;left:-119.00px;width:300px;text-align:center;letter-spacing:-0.2px;">17</div>
<div class="t" style="top:344.65px;height:10.08px;line-height:10.08px;font-size:7.2px;color:#3a3a3a;left:-119.00px;width:300px;text-align:center;letter-spacing:-0.2px;">18</div>
<div class="t" style="top:354.08px;height:10.08px;line-height:10.08px;font-size:7.2px;color:#3a3a3a;left:-119.00px;width:300px;text-align:center;letter-spacing:-0.2px;">19</div>
<div class="t" style="top:363.51px;height:10.08px;line-height:10.08px;font-size:7.2px;color:#3a3a3a;left:-119.00px;width:300px;text-align:center;letter-spacing:-0.2px;">20</div>
<div class="t" style="top:372.94px;height:10.08px;line-height:10.08px;font-size:7.2px;color:#3a3a3a;left:-119.00px;width:300px;text-align:center;letter-spacing:-0.2px;">21</div>
<div class="t" style="top:382.37px;height:10.08px;line-height:10.08px;font-size:7.2px;color:#3a3a3a;left:-119.00px;width:300px;text-align:center;letter-spacing:-0.2px;">22</div>
<div class="t" style="top:391.80px;height:10.08px;line-height:10.08px;font-size:7.2px;color:#3a3a3a;left:-119.00px;width:300px;text-align:center;letter-spacing:-0.2px;">23</div>
<div class="t" style="top:401.23px;height:10.08px;line-height:10.08px;font-size:7.2px;color:#3a3a3a;left:-119.00px;width:300px;text-align:center;letter-spacing:-0.2px;">24</div>
<div class="t" style="top:410.66px;height:10.08px;line-height:10.08px;font-size:7.2px;color:#3a3a3a;left:-119.00px;width:300px;text-align:center;letter-spacing:-0.2px;">25</div>
<div class="t" style="top:420.09px;height:10.08px;line-height:10.08px;font-size:7.2px;color:#3a3a3a;left:-119.00px;width:300px;text-align:center;letter-spacing:-0.2px;">26</div>
<div class="t" style="top:429.52px;height:10.08px;line-height:10.08px;font-size:7.2px;color:#3a3a3a;left:-119.00px;width:300px;text-align:center;letter-spacing:-0.2px;">27</div>
<div class="t" style="top:438.95px;height:10.08px;line-height:10.08px;font-size:7.2px;color:#3a3a3a;left:-119.00px;width:300px;text-align:center;letter-spacing:-0.2px;">28</div>
<div class="r" style="left:3.10px;top:162.30px;width:8.80px;height:9.20px;background:#f3f3f3;border:1px solid #9a9a9a;"></div>
<div class="r" style="left:12.50px;top:162.30px;width:9.20px;height:9.20px;background:#f3f3f3;border:1px solid #9a9a9a;"></div>
<div class="t" style="top:162.72px;height:10.36px;line-height:10.36px;font-size:7.4px;color:#555;left:-142.50px;width:300px;text-align:center;">1</div>
<div class="t" style="top:162.72px;height:10.36px;line-height:10.36px;font-size:7.4px;color:#555;left:-132.90px;width:300px;text-align:center;">2</div>
<div class="r" style="left:5.10px;top:195.20px;width:0.90px;height:8.40px;background:#8a8a8a;"></div>
<div class="r" style="left:5.10px;top:195.20px;width:4.10px;height:0.90px;background:#8a8a8a;"></div>
<div class="r" style="left:15.00px;top:198.60px;width:0.80px;height:0.80px;background:#999;"></div>
<div class="r" style="left:3.10px;top:203.50px;width:9.00px;height:8.90px;background:#f3f3f3;border:1px solid #9c9c9c;"></div>
<div class="r" style="left:5.20px;top:207.30px;width:4.80px;height:1.40px;background:#3a3a3a;"></div>
<div class="t" style="top:173.57px;height:9.66px;line-height:9.66px;font-size:6.9px;color:#1c1c1c;font-weight:bold;letter-spacing:-0.173px;left:46.55px;">Número de página</div>
<div class="t" style="top:183.47px;height:9.66px;line-height:9.66px;font-size:6.9px;color:#1c1c1c;font-weight:bold;letter-spacing:-0.387px;left:57.55px;">(obligatorio)</div>
<div class="t" style="top:173.57px;height:9.66px;line-height:9.66px;font-size:6.9px;color:#1c1c1c;font-weight:bold;letter-spacing:-0.283px;left:122.05px;">Tipo de pregunta</div>
<div class="t" style="top:183.47px;height:9.66px;line-height:9.66px;font-size:6.9px;color:#1c1c1c;font-weight:bold;letter-spacing:-0.137px;left:128.55px;">(obligatorio)</div>
<div class="t" style="top:173.57px;height:9.66px;line-height:9.66px;font-size:6.9px;color:#1c1c1c;font-weight:bold;letter-spacing:-0.108px;left:194.80px;">Nombre pregunta</div>
<div class="t" style="top:183.47px;height:9.66px;line-height:9.66px;font-size:6.9px;color:#1c1c1c;font-weight:bold;letter-spacing:-0.137px;left:203.50px;">(obligatorio)</div>
<div class="t" style="top:173.57px;height:9.66px;line-height:9.66px;font-size:6.9px;color:#1c1c1c;font-weight:bold;letter-spacing:-0.163px;left:265.30px;">Pregunta obligatoria</div>
<div class="t" style="top:183.47px;height:9.66px;line-height:9.66px;font-size:6.9px;color:#1c1c1c;font-weight:bold;letter-spacing:-0.137px;left:278.00px;">(obligatorio)</div>
<div class="t" style="top:173.57px;height:9.66px;line-height:9.66px;font-size:6.9px;color:#1c1c1c;font-weight:bold;letter-spacing:-0.147px;left:343.90px;">Nombre alternativa</div>
<div class="t" style="top:183.47px;height:9.66px;line-height:9.66px;font-size:6.9px;color:#1c1c1c;font-weight:bold;letter-spacing:-0.374px;left:359.10px;">(opcional)</div>
<div class="t" style="top:173.57px;height:9.66px;line-height:9.66px;font-size:6.9px;color:#1c1c1c;font-weight:bold;letter-spacing:-0.117px;left:424.60px;">Alternativa correcta</div>
<div class="t" style="top:183.47px;height:9.66px;line-height:9.66px;font-size:6.9px;color:#1c1c1c;font-weight:bold;letter-spacing:-0.374px;left:441.10px;">(opcional)</div>
<div class="t" style="top:194.47px;height:9.66px;line-height:9.66px;font-size:6.9px;color:#141414;left:-189.80px;width:300px;text-align:right;">1</div>
<div class="t" style="top:194.47px;height:9.66px;line-height:9.66px;font-size:6.9px;color:#141414;letter-spacing:0.033px;left:185.00px;">Capital de Chile</div>
<div class="t" style="top:194.47px;height:9.66px;line-height:9.66px;font-size:6.9px;color:#141414;letter-spacing:0.107px;left:264.00px;">Es obligatoria</div>
<div class="t" style="top:195.17px;height:9.66px;line-height:9.66px;font-size:6.9px;color:#141414;letter-spacing:0.320px;left:334.00px;">Arica</div>
<div class="t" style="top:203.87px;height:9.66px;line-height:9.66px;font-size:6.9px;color:#141414;left:-189.80px;width:300px;text-align:right;">1</div>
<div class="t" style="top:203.87px;height:9.66px;line-height:9.66px;font-size:6.9px;color:#141414;letter-spacing:0.033px;left:185.00px;">Capital de Chile</div>
<div class="t" style="top:203.87px;height:9.66px;line-height:9.66px;font-size:6.9px;color:#141414;letter-spacing:0.107px;left:264.00px;">Es obligatoria</div>
<div class="t" style="top:204.57px;height:9.66px;line-height:9.66px;font-size:6.9px;color:#141414;letter-spacing:0.051px;left:334.00px;">Santiago</div>
<div class="t" style="top:213.37px;height:9.66px;line-height:9.66px;font-size:6.9px;color:#141414;left:-189.80px;width:300px;text-align:right;">1</div>
<div class="t" style="top:213.37px;height:9.66px;line-height:9.66px;font-size:6.9px;color:#141414;letter-spacing:0.033px;left:185.00px;">Capital de Chile</div>
<div class="t" style="top:213.37px;height:9.66px;line-height:9.66px;font-size:6.9px;color:#141414;letter-spacing:0.107px;left:264.00px;">Es obligatoria</div>
<div class="t" style="top:214.07px;height:9.66px;line-height:9.66px;font-size:6.9px;color:#141414;letter-spacing:0.088px;left:334.00px;">Temuco</div>
<div class="t" style="top:222.77px;height:9.66px;line-height:9.66px;font-size:6.9px;color:#141414;left:-189.80px;width:300px;text-align:right;">1</div>
<div class="t" style="top:222.77px;height:9.66px;line-height:9.66px;font-size:6.9px;color:#141414;letter-spacing:0.033px;left:185.00px;">Capital de Chile</div>
<div class="t" style="top:222.77px;height:9.66px;line-height:9.66px;font-size:6.9px;color:#141414;letter-spacing:0.107px;left:264.00px;">Es obligatoria</div>
<div class="t" style="top:223.47px;height:9.66px;line-height:9.66px;font-size:6.9px;color:#141414;letter-spacing:0.279px;left:334.00px;">Valparaiso</div>
<div class="t" style="top:203.97px;height:9.66px;line-height:9.66px;font-size:6.9px;color:#141414;letter-spacing:0.008px;left:417.40px;">Es la opción correcta</div>
<div class="t" style="top:194.57px;height:9.66px;line-height:9.66px;font-size:6.9px;color:#141414;letter-spacing:0.026px;left:114.30px;">Selección única</div>
<div class="r" style="left:111.70px;top:193.10px;width:72.30px;height:11.10px;border:1.2px solid #1e7b46;"></div>
<div class="r" style="left:182.40px;top:202.60px;width:2.20px;height:2.20px;background:#1e7b46;border:0.5px solid #fff;"></div>
<div class="r" style="left:183.20px;top:194.00px;width:9.40px;height:9.70px;background:#fcfcfc;border:1px solid #d6d6d6;"></div>
<svg class="r" style="left:186.30px;top:197.80px;" width="3.40" height="2.40" viewBox="0 0 3.40 2.40"><path d="M0 0 H3.4 L1.7 2.2 Z" fill="#444"/></svg>
<div class="r" style="left:185.40px;top:175.00px;width:17.50px;height:17.40px;background:#fff;border:1px solid #848484;border-radius:3.4px;"></div>
<svg class="r" style="left:189.10px;top:178.60px;" width="10.20" height="9.80" viewBox="0 0 10.20 9.80"><defs><linearGradient id="cg1" x1="0.6" y1="0" x2="0.3" y2="1"><stop offset="0" stop-color="#1d6fe2"/><stop offset="0.3" stop-color="#1fa5e6"/><stop offset="0.6" stop-color="#2ec46c"/><stop offset="1" stop-color="#f5c522"/></linearGradient><linearGradient id="cg2" x1="0.8" y1="0" x2="0.2" y2="1"><stop offset="0" stop-color="#9460f4"/><stop offset="0.5" stop-color="#e152c6"/><stop offset="1" stop-color="#f5512a"/></linearGradient></defs><path d="M7.6 9.5 H4.2 C3.2 9.5 2.8 8.9 2.6 8.1 L2.3 6.8 H4.2 C5 6.8 5.3 6.4 5.5 5.7 L6.2 3.2 C6.4 2.5 6.9 2 7.7 2 H8.7 C9.7 2 10.2 2.8 9.9 3.8 L8.7 8.2 C8.5 9 8.2 9.5 7.6 9.5 Z" fill="url(#cg2)"/><path d="M2.6 0.3 H6 C7 0.3 7.4 0.9 7.6 1.7 L7.9 3 H6 C5.2 3 4.9 3.4 4.7 4.1 L4 6.6 C3.8 7.3 3.3 7.8 2.5 7.8 H1.5 C0.5 7.8 0 7 0.3 6 L1.5 1.6 C1.7 0.8 2 0.3 2.6 0.3 Z" fill="url(#cg1)"/></svg>
<div class="r" style="left:112.20px;top:204.40px;width:78.70px;height:46.20px;background:#fff;border:1px solid #7a7a7a;box-shadow:1px 1px 1.5px rgba(0,0,0,0.25);"></div>
<div class="r" style="left:113.20px;top:205.40px;width:76.70px;height:10.70px;background:#d4d4d4;"></div>
<div class="t" style="top:205.27px;height:11.06px;line-height:11.06px;font-size:7.9px;color:#1a1a1a;letter-spacing:-0.188px;left:117.30px;">Selección única</div>
<div class="t" style="top:216.67px;height:11.06px;line-height:11.06px;font-size:7.9px;color:#1a1a1a;letter-spacing:-0.128px;left:117.30px;">Selección múltiple</div>
<div class="t" style="top:227.97px;height:11.06px;line-height:11.06px;font-size:7.9px;color:#1a1a1a;letter-spacing:-0.318px;left:117.30px;">Párrafo</div>
<div class="t" style="top:239.27px;height:11.06px;line-height:11.06px;font-size:7.9px;color:#1a1a1a;letter-spacing:-0.153px;left:117.30px;">Texto abierto</div>
<div class="r" style="left:905.80px;top:162.00px;width:12.20px;height:286.40px;background:#f1f1f1;"></div>
<svg class="r" style="left:909.80px;top:165.60px;" width="6.20" height="4.60" viewBox="0 0 6.20 4.60"><path d="M3.1 0 L6.2 4.6 H0 Z" fill="#505050"/></svg>
<div class="r" style="left:909.60px;top:173.80px;width:5.80px;height:11.60px;background:#5f5f5f;border-radius:2.9px;"></div>
<svg class="r" style="left:909.40px;top:443.20px;" width="6.60" height="4.80" viewBox="0 0 6.60 4.80"><path d="M0 0 H6.6 L3.3 4.8 Z" fill="#505050"/></svg>
<div class="r" style="left:3.50px;top:448.40px;width:914.50px;height:21.60px;background:#f1f1f1;"></div>
<svg class="r" style="left:20.40px;top:455.60px;" width="4.00" height="7.60" viewBox="0 0 4.00 7.60"><path d="M3.6 0.4 L0.6 3.8 L3.6 7.2" fill="none" stroke="#9a9a9a" stroke-width="0.9"/></svg>
<svg class="r" style="left:42.60px;top:455.60px;" width="4.00" height="7.60" viewBox="0 0 4.00 7.60"><path d="M0.4 0.4 L3.4 3.8 L0.4 7.2" fill="none" stroke="#9a9a9a" stroke-width="0.9"/></svg>
<div class="r" style="left:79.00px;top:449.40px;width:35.40px;height:19.00px;background:#fff;border-radius:3px;box-shadow:0 0 1px rgba(0,0,0,0.15);"></div>
<div class="t" style="top:452.88px;height:12.04px;line-height:12.04px;font-size:8.6px;color:#222;font-weight:bold;letter-spacing:-0.005px;left:84.80px;">Hoja1</div>
<div class="r" style="left:84.80px;top:464.60px;width:23.40px;height:1.40px;background:#1e7b46;border-radius:0.7px;"></div>
<div class="r" style="left:115.80px;top:453.00px;width:0.80px;height:12.00px;background:#d0d0d0;"></div>
<svg class="r" style="left:144.60px;top:455.40px;" width="8.00" height="8.00" viewBox="0 0 8.00 8.00"><path d="M4 0 V8 M0 4 H8" stroke="#444" stroke-width="0.9"/></svg>
<div class="r" style="left:463.20px;top:457.20px;width:1.20px;height:1.30px;background:#444;"></div>
<div class="r" style="left:463.20px;top:459.80px;width:1.20px;height:1.30px;background:#444;"></div>
<div class="r" style="left:463.20px;top:462.40px;width:1.20px;height:1.30px;background:#444;"></div>
<svg class="r" style="left:478.00px;top:456.00px;" width="5.20" height="7.40" viewBox="0 0 5.20 7.40"><path d="M5.2 0 V7.4 L0 3.7 Z" fill="#444"/></svg>
<div class="r" style="left:486.00px;top:456.40px;width:395.80px;height:6.90px;background:#6e6e6e;border-radius:3.4px;"></div>
<svg class="r" style="left:897.80px;top:456.00px;" width="5.20" height="7.40" viewBox="0 0 5.20 7.40"><path d="M0 0 V7.4 L5.2 3.7 Z" fill="#444"/></svg>
<div class="r" style="left:3.50px;top:470.00px;width:914.50px;height:15.00px;background:#f3f3f3;"></div>
<div class="t" style="top:473.13px;height:11.34px;line-height:11.34px;font-size:8.1px;color:#2a2a2a;letter-spacing:-0.377px;left:9.00px;">Listo</div>
<svg class="r" style="left:38.00px;top:473.40px;" width="10.40" height="10.00" viewBox="0 0 10.40 10.00"><circle cx="3.6" cy="1.4" r="1.1" fill="none" stroke="#444" stroke-width="0.8"/><path d="M0.4 3 L3.6 4 L6.8 3 M3.6 4 V6 L2 9.4 M3.6 6 L4.4 7.4" fill="none" stroke="#444" stroke-width="0.8"/><path d="M5.6 7.4 L7 8.8 L9.8 5.6" fill="none" stroke="#444" stroke-width="0.9"/></svg>
<div class="t" style="top:473.13px;height:11.34px;line-height:11.34px;font-size:8.1px;color:#2a2a2a;letter-spacing:-0.113px;left:50.40px;">Accesibilidad: todo correcto</div>
<div class="r" style="left:718.00px;top:471.40px;width:27.00px;height:13.60px;background:#dcdcdc;"></div>
<svg class="r" style="left:726.20px;top:473.80px;" width="10.00" height="9.00" viewBox="0 0 10.00 9.00"><rect x="0.5" y="0.5" width="9" height="8" fill="none" stroke="#333" stroke-width="0.9"/><path d="M3.5 0.5 V8.5 M6.5 0.5 V8.5 M0.5 3.2 H9.5 M0.5 5.8 H9.5" stroke="#333" stroke-width="0.8"/></svg>
<svg class="r" style="left:753.00px;top:473.80px;" width="10.00" height="9.00" viewBox="0 0 10.00 9.00"><rect x="0.5" y="0.5" width="9" height="8" fill="none" stroke="#444" stroke-width="0.9"/><rect x="2.6" y="1.8" width="4.8" height="5.4" fill="none" stroke="#444" stroke-width="0.8"/><path d="M4.2 2 V7 M5.8 2 V7" stroke="#777" stroke-width="0.5"/></svg>
<svg class="r" style="left:780.00px;top:473.80px;" width="10.00" height="9.00" viewBox="0 0 10.00 9.00"><rect x="0.5" y="0.5" width="9" height="8" fill="none" stroke="#444" stroke-width="0.9"/><path d="M3 0.5 V4.4 H7 V0.5" fill="none" stroke="#444" stroke-width="0.9"/></svg>
<div class="r" style="left:803.00px;top:478.00px;width:4.40px;height:1.00px;background:#444;"></div>
<div class="r" style="left:811.00px;top:478.20px;width:67.00px;height:0.80px;background:#7a7a7a;"></div>
<div class="r" style="left:834.20px;top:474.20px;width:3.60px;height:8.60px;background:#444;"></div>
<div class="r" style="left:845.00px;top:476.60px;width:0.80px;height:4.00px;background:#777;"></div>
<svg class="r" style="left:881.40px;top:475.40px;" width="6.40" height="6.40" viewBox="0 0 6.40 6.40"><path d="M3.2 0 V6.4 M0 3.2 H6.4" stroke="#444" stroke-width="0.9"/></svg>
<div class="t" style="top:474.20px;height:9.8px;line-height:9.8px;font-size:7.0px;color:#333;left:896.20px;">75%</div>
</body></html>
